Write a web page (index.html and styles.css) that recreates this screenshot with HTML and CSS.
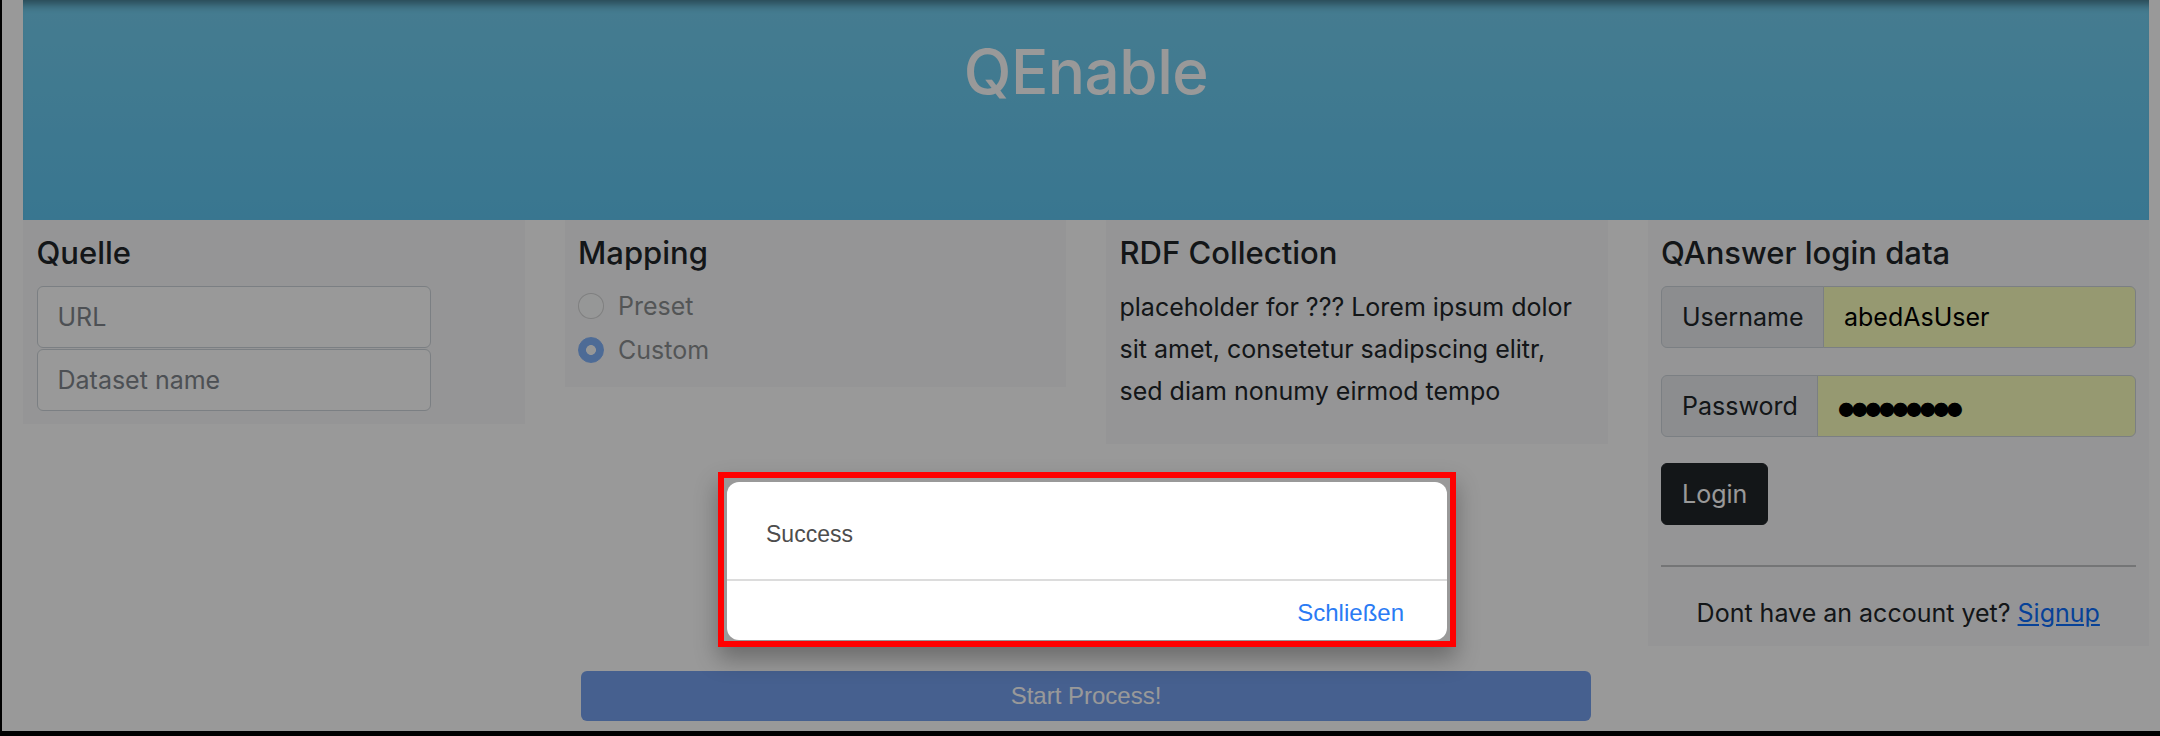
FILE: index.html
```html
<!DOCTYPE html>
<html lang="de">
<head>
<meta charset="utf-8">
<title>QEnable</title>
<link rel="stylesheet" href="styles.css">
</head>
<body>
<div class="page">
  <header class="hero">
    <h1 class="hero-title">QEnable</h1>
  </header>

  <main class="cards">
    <section class="card">
      <h5 class="card-title">Quelle</h5>
      <div class="stack">
        <input class="field" type="text" placeholder="URL">
        <input class="field" type="text" placeholder="Dataset name">
      </div>
    </section>

    <section class="card">
      <h5 class="card-title">Mapping</h5>
      <div class="check">
        <input type="radio" name="mapping" id="preset" disabled>
        <label for="preset">Preset</label>
      </div>
      <div class="check">
        <input type="radio" name="mapping" id="custom" checked disabled>
        <label for="custom">Custom</label>
      </div>
    </section>

    <section class="card">
      <h5 class="card-title">RDF Collection</h5>
      <p class="card-text">placeholder for ??? Lorem ipsum dolor sit amet, consetetur sadipscing elitr, sed diam nonumy eirmod tempo</p>
    </section>

    <section class="card">
      <h5 class="card-title">QAnswer login data</h5>
      <div class="group">
        <span class="addon">Username</span>
        <input class="field group-field" type="text" value="abedAsUser">
      </div>
      <div class="group">
        <span class="addon">Password</span>
        <input class="field group-field pw" type="password" value="secretpw1">
      </div>
      <button class="btn-login" type="button">Login</button>
      <hr class="sep">
      <p class="signup">Dont have an account yet? <a href="#">Signup</a></p>
    </section>
  </main>

  <div class="actions">
    <button class="btn-start" type="button" disabled>Start Process!</button>
  </div>

  <div class="backdrop"></div>

  <div class="modal">
    <div class="dialog">
      <div class="dialog-body">Success</div>
      <div class="dialog-footer"><button class="btn-close" type="button">Schließen</button></div>
    </div>
  </div>
</div>
</body>
</html>
```

FILE: styles.css
```css
html, body {
  margin: 0;
  background: #000;
}

body {
  font-family: Inter, "Noto Sans", sans-serif;
  color: #212529;
}

* { box-sizing: border-box; }

.page {
  position: relative;
  margin-left: 2px;
  height: 731px;
  background: #fff;
  padding: 0 11px 0 21px;
  overflow: hidden;
}

/* header */
.hero {
  height: 220px;
  padding-top: 32px;
  text-align: center;
  background: linear-gradient(#74cff0, #5fc5f0);
  box-shadow: inset 0 12px 10px -8px rgba(0, 0, 0, .45);
}

.hero-title {
  margin: 0;
  color: #fff;
  font-size: 62px;
  font-weight: 500;
  line-height: 80px;
  letter-spacing: -0.5px;
}

/* cards */
.cards {
  display: grid;
  grid-template-columns: repeat(4, minmax(0, 1fr));
  column-gap: 40px;
  align-items: start;
}

.card {
  background: #f8f9fa;
  padding: 13px 13.5px;
}

.card-title {
  margin: 0 0 13px;
  font-size: 31px;
  font-weight: 500;
  line-height: 40px;
}

.field {
  display: block;
  width: 394px;
  height: 62px;
  padding: 0 20px;
  font-family: inherit;
  font-size: 25px;
  color: #212529;
  background: #fff;
  border: 1.5px solid #ced4da;
  border-radius: 6px;
}

.field::placeholder { color: #80868c; }

.stack .field + .field { margin-top: 1px; }

/* radios */
.check {
  display: flex;
  align-items: center;
  height: 40px;
  margin-bottom: 4px;
}

.check input {
  appearance: none;
  width: 26px;
  height: 26px;
  margin: 0 14px 0 0;
  border: 1.5px solid rgba(0, 0, 0, .3);
  border-radius: 50%;
  background: #fff;
  opacity: .5;
}

.check input:checked {
  border-color: #0d6efd;
  background: radial-gradient(circle, #fff 0 27%, #0d6efd 31%);
}

.check label {
  font-size: 25px;
  opacity: .5;
}

.card-text {
  margin: 0 0 19px;
  font-size: 25px;
  line-height: 42px;
}

/* login group */
.group {
  display: flex;
  margin-bottom: 26.5px;
}

.addon {
  display: flex;
  align-items: center;
  height: 62px;
  padding: 0 20px;
  font-size: 25px;
  background: #e9ecef;
  border: 1.5px solid #ced4da;
  border-radius: 6px 0 0 6px;
}

.group-field {
  flex: 1;
  width: auto;
  min-width: 0;
  margin-left: -1.5px;
  border-radius: 0 6px 6px 0;
  background: #fbffbd;
  color: #000;
}

.pw {
  font-size: 46px;
  letter-spacing: -12.3px;
  padding-left: 15px;
}

.btn-login {
  display: block;
  height: 62px;
  padding: 0 20px;
  font-family: inherit;
  font-size: 25px;
  color: #fff;
  background: #212529;
  border: 1.5px solid #212529;
  border-radius: 6px;
}

.sep {
  margin: 40px 0 26px;
  border: 0;
  border-top: 2px solid rgba(33, 37, 41, .25);
}

.signup {
  margin: 0;
  text-align: center;
  font-size: 25px;
  line-height: 40px;
}

.signup a { color: #0d6efd; }

/* start button */
.actions {
  display: flex;
  justify-content: center;
  margin-top: 25px;
}

.btn-start {
  width: 1010px;
  height: 50px;
  font-family: "Liberation Sans", Arial, sans-serif;
  font-size: 24px;
  color: #fff;
  background: #76a0ee;
  border: 0;
  border-radius: 6px;
}

/* modal */
.backdrop {
  position: absolute;
  inset: 0;
  background: rgba(0, 0, 0, .4);
}

.modal {
  position: absolute;
  top: 472px;
  left: 716px;
  width: 738px;
  padding: 4px 3px 1px;
  border: 6px solid #f00;
  box-shadow: 0 12px 22px rgba(0, 0, 0, .3);
}

.dialog {
  background: #fff;
  border-radius: 12px;
  font-family: "Liberation Sans", Arial, sans-serif;
}

.dialog-body {
  display: flex;
  align-items: center;
  height: 99px;
  padding: 8px 0 0 39px;
  font-size: 23px;
  color: #4d4d4d;
  border-bottom: 2px solid #dcdcdc;
}

.dialog-footer {
  display: flex;
  justify-content: flex-end;
  align-items: center;
  height: 59px;
  padding: 5px 43px 0 0;
}

.btn-close {
  padding: 0;
  border: 0;
  background: none;
  font-family: inherit;
  font-size: 24px;
  color: #2a7bf4;
}
```
